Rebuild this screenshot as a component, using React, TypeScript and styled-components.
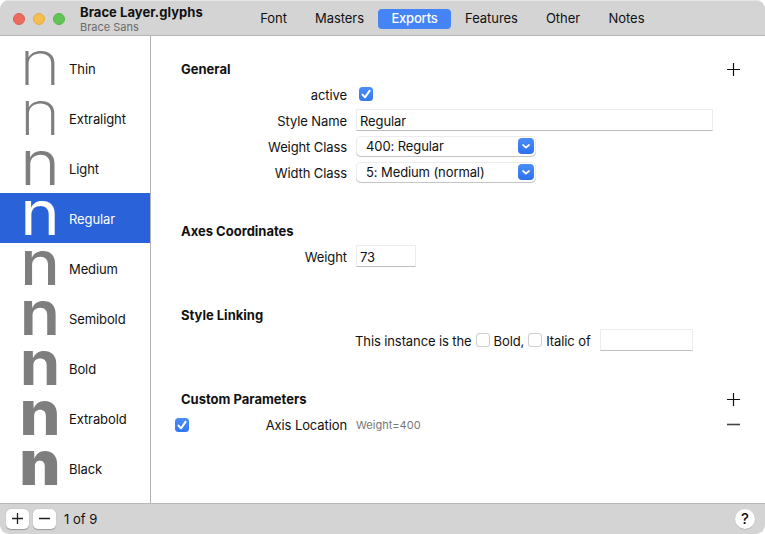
import React from 'react';
import styled, { createGlobalStyle } from 'styled-components';

const GlobalStyle = createGlobalStyle`
  *, *::before, *::after { box-sizing: border-box; }
  body { margin: 0; background: #fff; }
`;

const Window = styled.div`
  width: 765px;
  height: 534px;
  display: flex;
  flex-direction: column;
  overflow: hidden;
  border-radius: 9px;
  background: #fff;
  color: #111;
  font: 13px/26px Inter, 'Liberation Sans', sans-serif;
  letter-spacing: -0.1px;
  white-space: nowrap;
`;

const TitleBar = styled.header`
  flex: none;
  height: 36px;
  display: flex;
  background: #d4d4d4;
  border-top: 1px solid #e6e6e6;
  border-bottom: 1px solid #b5b5b5;
`;

const Lights = styled.div`
  display: flex;
  gap: 8px;
  padding: 12px 0 0 13px;
  width: 80px;
`;

const Light = styled.i<{ $color: string; $edge: string }>`
  width: 12px;
  height: 12px;
  border-radius: 50%;
  background: ${(p) => p.$color};
  border: 1px solid ${(p) => p.$edge};
`;

const Titles = styled.div`
  width: 166px;
  padding-top: 3px;
`;

const DocName = styled.div`
  font-weight: 700;
  line-height: 17px;
  letter-spacing: 0.05px;
`;

const FamilyName = styled.div`
  font-size: 11px;
  line-height: 13px;
  letter-spacing: 0;
  color: #6b6b6b;
`;

const Tabs = styled.nav`
  display: flex;
  padding-top: 8px;
`;

const Tab = styled.span<{ $width: number; $active?: boolean }>`
  width: ${(p) => p.$width}px;
  height: 20px;
  margin-right: 5px;
  line-height: 19px;
  letter-spacing: ${(p) => (p.$active ? '-0.2px' : '-0.05px')};
  text-align: center;
  border-radius: 4px;
  font-weight: ${(p) => (p.$active ? 500 : 400)};
  color: ${(p) => (p.$active ? '#fff' : '#111')};
  background: ${(p) => (p.$active ? '#4584f5' : 'transparent')};
`;

const Body = styled.div`
  flex: 1;
  display: flex;
  min-height: 0;
`;

const Sidebar = styled.aside`
  width: 151px;
  padding-top: 7px;
  border-right: 1px solid #b2b2b2;
`;

const InstanceRow = styled.div<{ $selected: boolean }>`
  height: 50px;
  display: flex;
  align-items: center;
  color: ${(p) => (p.$selected ? '#fff' : '#111')};
  background: ${(p) => (p.$selected ? '#2962d9' : 'transparent')};
`;

const Preview = styled.span<{ $weight: number; $stretch: number; $selected: boolean }>`
  width: 58px;
  height: 50px;
  margin: 0 0 0 11px;
  line-height: 39px;
  font-size: 61.5px;
  letter-spacing: 0;
  text-align: center;
  font-weight: ${(p) => p.$weight};
  transform: scaleX(${(p) => p.$stretch});
  color: ${(p) => (p.$selected ? '#fff' : '#7e7e7e')};
`;

const InstanceName = styled.span`
  padding-top: 2px;
`;

const Main = styled.main`
  flex: 1;
  display: flex;
  flex-direction: column;
  gap: 32px;
  padding: 20px 25px 0 30px;
`;

const SectionHead = styled.div`
  height: 26px;
  display: flex;
  align-items: center;
  justify-content: space-between;
  font-weight: 700;
  letter-spacing: 0;
`;

const Field = styled.div`
  height: 26px;
  display: grid;
  grid-template-columns: 166px 1fr;
  column-gap: 9px;
  align-items: center;
`;

const Label = styled.label`
  display: flex;
  align-items: center;
  justify-content: flex-end;
`;

const LeadingLabel = styled(Label)`
  justify-content: space-between;
`;

const Controls = styled.div`
  display: flex;
  align-items: center;
  height: 26px;
`;

const TextField = styled.div<{ $width: number }>`
  width: ${(p) => p.$width}px;
  height: 22px;
  margin-bottom: 2px;
  padding-left: 3px;
  line-height: 23px;
  border: 1px solid #ececec;
  border-bottom-color: #bdbdbd;
`;

const PopUp = styled.div`
  width: 180px;
  height: 21px;
  margin-bottom: 2px;
  padding: 0 2px 0 10px;
  display: flex;
  align-items: center;
  justify-content: space-between;
  line-height: 20px;
  border-radius: 5px;
  box-shadow: inset 0 -1px 0 #c4c4c4, inset 0 0 0 1px #ececec;
`;

const PopUpButton = styled.span`
  width: 16px;
  height: 16px;
  display: grid;
  place-items: center;
  border-radius: 4px;
  background: linear-gradient(#4a8df8, #2f71ee);
`;

const CheckBox = styled.span<{ $on?: boolean }>`
  flex: none;
  width: 14px;
  height: 14px;
  display: grid;
  place-items: center;
  border-radius: 3.5px;
  background: ${(p) => (p.$on ? 'linear-gradient(#4a8df8, #3478f2)' : '#fff')};
  box-shadow: ${(p) => (p.$on ? 'none' : 'inset 0 0 0 1px #cfcfcf')};
`;

const ActiveBox = styled(CheckBox)`
  margin: 0 0 3px 3px;
`;

const ParameterBox = styled(CheckBox)`
  margin: 0 0 1px -6px;
`;

const LinkBox = styled(CheckBox)`
  margin: 0 4px 2px;
`;

const LinkName = styled.div`
  margin-left: 8px;
`;

const LinkText = styled.div`
  display: flex;
  align-items: center;
  width: 237px;
  margin-left: -1px;
`;

const Value = styled.span`
  font-size: 11px;
  letter-spacing: 0.02px;
  color: #777;
`;

const RemoveSlot = styled.span`
  flex: 1;
  display: flex;
  justify-content: flex-end;
  padding-bottom: 2px;
`;

const Footer = styled.footer`
  flex: none;
  height: 31px;
  display: flex;
  align-items: center;
  gap: 4px;
  padding: 0 10px 1px 6px;
  background: #d4d4d4;
  border-top: 1px solid #b8b8b8;
`;

const FootButton = styled.span`
  width: 23px;
  height: 20px;
  display: grid;
  place-items: center;
  border-radius: 5px;
  background: #fff;
  box-shadow: 0 0.5px 1px #999;
`;

const Count = styled.span`
  flex: 1;
  margin: 1px 0 0 4px;
  letter-spacing: 0;
`;

const Help = styled.span`
  width: 20px;
  height: 20px;
  border-radius: 50%;
  background: #fff;
  box-shadow: 0 0.5px 1px #aaa;
  line-height: 20px;
  text-align: center;
  font-size: 15px;
  font-weight: 500;
`;

const Plus = () => (
  <svg width="13" height="13" viewBox="0 0 13 13" stroke="#111" strokeWidth="1.2">
    <path d="M0 6.5H13M6.5 0V13" />
  </svg>
);

const Minus = () => (
  <svg width="13" height="13" viewBox="0 0 13 13" stroke="#444" strokeWidth="1.6">
    <path d="M0 6.5H13" />
  </svg>
);

const AddIcon = () => (
  <svg width="11" height="12" viewBox="0 0 11 12" stroke="#222" strokeWidth="1.3">
    <path d="M0 5.5H11M5.5 0V11" />
  </svg>
);

const RemoveIcon = () => (
  <svg width="11" height="12" viewBox="0 0 11 12" stroke="#222" strokeWidth="1.3">
    <path d="M0 5.5H11" />
  </svg>
);

const Tick = () => (
  <svg width="14" height="14" viewBox="0 0 14 14" fill="none" stroke="#fff" strokeWidth="2" strokeLinecap="round" strokeLinejoin="round">
    <path d="M3.5 7.6L6 10.3L10.7 3.7" />
  </svg>
);

const Chevron = () => (
  <svg width="16" height="16" viewBox="0 0 16 16" fill="none" stroke="#fff" strokeWidth="1.7" strokeLinecap="round" strokeLinejoin="round">
    <path d="M5 7L8 9.7L11 7" />
  </svg>
);

const tabs = [
  { name: 'Font', width: 55 },
  { name: 'Masters', width: 67 },
  { name: 'Exports', width: 73 },
  { name: 'Features', width: 71 },
  { name: 'Other', width: 62 },
  { name: 'Notes', width: 55 },
];

const instances = [
  { name: 'Thin', weight: 150, stretch: 1.16 },
  { name: 'Extralight', weight: 220, stretch: 1.14 },
  { name: 'Light', weight: 300, stretch: 1.11 },
  { name: 'Regular', weight: 400, stretch: 1.09 },
  { name: 'Medium', weight: 500, stretch: 1.07 },
  { name: 'Semibold', weight: 600, stretch: 1.07 },
  { name: 'Bold', weight: 720, stretch: 1.06 },
  { name: 'Extrabold', weight: 800, stretch: 1.05 },
  { name: 'Black', weight: 900, stretch: 1.02 },
];

export default function App() {
  return (
    <>
      <GlobalStyle />
      <Window>
        <TitleBar>
          <Lights>
            <Light $color="#ed6a5f" $edge="#df5c52" />
            <Light $color="#f5bd4f" $edge="#e5ad3d" />
            <Light $color="#61c454" $edge="#54b646" />
          </Lights>
          <Titles>
            <DocName>Brace Layer.glyphs</DocName>
            <FamilyName>Brace Sans</FamilyName>
          </Titles>
          <Tabs>
            {tabs.map((t) => (
              <Tab key={t.name} $width={t.width} $active={t.name === 'Exports'}>{t.name}</Tab>
            ))}
          </Tabs>
        </TitleBar>
        <Body>
          <Sidebar>
            {instances.map(({ name, weight, stretch }) => (
              <InstanceRow key={name} $selected={name === 'Regular'}>
                <Preview $weight={weight} $stretch={stretch} $selected={name === 'Regular'}>n</Preview>
                <InstanceName>{name}</InstanceName>
              </InstanceRow>
            ))}
          </Sidebar>
          <Main>
            <section>
              <SectionHead>General<Plus /></SectionHead>
              <Field>
                <Label>active</Label>
                <Controls><ActiveBox $on><Tick /></ActiveBox></Controls>
              </Field>
              <Field>
                <Label>Style Name</Label>
                <Controls><TextField $width={357}>Regular</TextField></Controls>
              </Field>
              <Field>
                <Label>Weight Class</Label>
                <Controls><PopUp>400: Regular<PopUpButton><Chevron /></PopUpButton></PopUp></Controls>
              </Field>
              <Field>
                <Label>Width Class</Label>
                <Controls><PopUp>5: Medium (normal)<PopUpButton><Chevron /></PopUpButton></PopUp></Controls>
              </Field>
            </section>
            <section>
              <SectionHead>Axes Coordinates</SectionHead>
              <Field>
                <Label>Weight</Label>
                <Controls><TextField $width={60}>73</TextField></Controls>
              </Field>
            </section>
            <section>
              <SectionHead>Style Linking</SectionHead>
              <Field>
                <span />
                <Controls>
                  <LinkText>This instance is the<LinkBox />Bold,<LinkBox />Italic of</LinkText>
                  <LinkName><TextField $width={93} /></LinkName>
                </Controls>
              </Field>
            </section>
            <section>
              <SectionHead>Custom Parameters<Plus /></SectionHead>
              <Field>
                <LeadingLabel><ParameterBox $on><Tick /></ParameterBox>Axis Location</LeadingLabel>
                <Controls><Value>Weight=400</Value><RemoveSlot><Minus /></RemoveSlot></Controls>
              </Field>
            </section>
          </Main>
        </Body>
        <Footer>
          <FootButton><AddIcon /></FootButton>
          <FootButton><RemoveIcon /></FootButton>
          <Count>1 of 9</Count>
          <Help>?</Help>
        </Footer>
      </Window>
    </>
  );
}
